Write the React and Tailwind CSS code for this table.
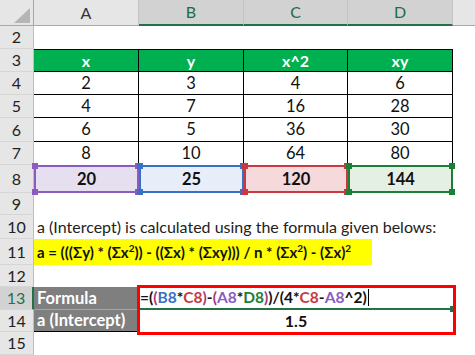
import React from "react";

const FONT = "font-['Lato','Open_Sans',sans-serif]";

const RowHead = ({ n, h, active }) => (
  <div
    className={`w-[34px] shrink-0 flex items-center justify-center border-b border-[#d6d6d6] text-[16px] ${
      active
        ? "bg-[#d2d2d2] text-[#217346] border-r-2 border-r-[#217346]"
        : "bg-[#e6e6e6] text-[#222] border-r border-r-[#bdbdbd]"
    } ${h}`}
  >
    {n}
  </div>
);

const ColHead = ({ label, w, sel }) => (
  <div
    className={`${w} h-full flex items-center justify-center text-[16px] border-r border-[#c4c4c4] ${
      sel
        ? "bg-[#d2d2d2] text-[#1e6b45] border-b-2 border-b-[#217346]"
        : "bg-[#e6e6e6] text-[#333] border-b border-b-[#a8a8a8]"
    }`}
  >
    {label}
  </div>
);

const widths = ["w-[105px]", "w-[105px]", "w-[104px]", "w-[105px]"];

const DataRow = ({ n, vals, h }) => (
  <div className={`flex ${h}`}>
    <RowHead n={n} h={h} />
    {vals.map((v, i) => (
      <div
        key={i}
        className={`${widths[i]} shrink-0 flex items-center justify-center border-r border-b border-black text-[16.5px] text-[#111]`}
      >
        {v}
      </div>
    ))}
    <div className="flex-1" />
  </div>
);

const Corner = ({ pos, color }) => (
  <span className={`absolute w-[6px] h-[6px] ${pos} ${color}`} />
);

const SumCell = ({ w, v, border, fill, sq }) => (
  <div
    className={`${w} shrink-0 relative flex items-center justify-center border-2 ${border} ${fill} font-bold text-[16.5px] text-[#111]`}
  >
    {v}
    <Corner pos="-left-[4px] -top-[4px]" color={sq} />
    <Corner pos="-right-[4px] -top-[4px]" color={sq} />
    <Corner pos="-left-[4px] -bottom-[4px]" color={sq} />
    <Corner pos="-right-[4px] -bottom-[4px]" color={sq} />
  </div>
);

const Sup = ({ children }) => (
  <sup className="text-[10px] relative -top-[6px]">{children}</sup>
);

export default function App() {
  return (
    <div className={`w-[475px] h-[355px] overflow-hidden bg-white ${FONT}`}>
      {/* column headers */}
      <div className="flex h-[26px]">
        <div className="w-[34px] shrink-0 relative bg-[#e6e6e6] border-r border-b border-[#a8a8a8]">
          <svg className="absolute left-[14px] top-[8px]" width="16" height="15" viewBox="0 0 16 15">
            <polygon points="16,0 16,15 0,15" fill="#b5b5b5" />
          </svg>
        </div>
        <ColHead label="A" w="w-[105px]" />
        <ColHead label="B" w="w-[105px]" sel />
        <ColHead label="C" w="w-[104px]" sel />
        <ColHead label="D" w="w-[105px]" sel />
        <div className="flex-1 bg-[#e6e6e6] border-b border-[#a8a8a8]" />
      </div>

      {/* row 2 */}
      <div className="flex h-[23px]">
        <RowHead n="2" h="h-[23px]" />
      </div>

      {/* row 3 header */}
      <div className="flex h-[23px]">
        <RowHead n="3" h="h-[23px]" />
        {["x", "y", "x^2", "xy"].map((v, i) => (
          <div
            key={v}
            className={`${widths[i]} shrink-0 flex items-center justify-center bg-[#00b050] border-r border-t border-b border-black text-white font-bold text-[16px]`}
          >
            {v}
          </div>
        ))}
      </div>

      <DataRow n="4" vals={["2", "3", "4", "6"]} h="h-[23px]" />
      <DataRow n="5" vals={["4", "7", "16", "28"]} h="h-[23px]" />
      <DataRow n="6" vals={["6", "5", "36", "30"]} h="h-[24px]" />
      <div className="flex h-[23px]">
        <RowHead n="7" h="h-[23px]" />
        {["8", "10", "64", "80"].map((v, i) => (
          <div
            key={i}
            className={`${widths[i]} shrink-0 flex items-center justify-center border-r border-black text-[16.5px] text-[#111]`}
          >
            {v}
          </div>
        ))}
      </div>

      {/* row 8 sums */}
      <div className="flex h-[28px]">
        <RowHead n="8" h="h-[28px]" />
        <SumCell w="w-[105px]" v="20" border="border-[#8a5cc0]" fill="bg-[#e6dff0]" sq="bg-[#8a5cc0]" />
        <SumCell w="w-[105px]" v="25" border="border-[#3a6fc6]" fill="bg-[#e7eef9]" sq="bg-[#3a6fc6]" />
        <SumCell w="w-[104px]" v="120" border="border-[#c73a42]" fill="bg-[#f5d9db]" sq="bg-[#c73a42]" />
        <SumCell w="w-[105px]" v="144" border="border-[#1b7f35]" fill="bg-[#e3f0e3]" sq="bg-[#1b7f35]" />
      </div>

      {/* row 9 */}
      <div className="flex h-[22px]">
        <RowHead n="9" h="h-[22px]" />
      </div>

      {/* row 10 */}
      <div className="flex h-[24px]">
        <RowHead n="10" h="h-[24px]" />
        <div className="pl-[3px] flex items-center text-[16px] text-[#222] whitespace-nowrap">
          a (Intercept) is calculated using the formula given belows:
        </div>
      </div>

      {/* row 11 */}
      <div className="flex h-[26px]">
        <RowHead n="11" h="h-[26px]" />
        <div className="w-[338px] shrink-0 bg-[#ffff00] pl-[3px] flex items-center font-bold text-[15px] text-[#111] whitespace-nowrap">
          <span>
            a = (((Σy) * (Σx<Sup>2</Sup>)) - ((Σx) * (Σxy))) / n * (Σx<Sup>2</Sup>) - (Σx)<Sup>2</Sup>
          </span>
        </div>
      </div>

      {/* row 12 */}
      <div className="flex h-[22px]">
        <RowHead n="12" h="h-[22px]" />
      </div>

      {/* rows 13-14 */}
      <div className="flex h-[45px]">
        <div className="flex flex-col">
          <RowHead n="13" h="h-[23px]" active />
          <RowHead n="14" h="h-[22px]" />
        </div>
        <div className="w-[105px] shrink-0 flex flex-col border-b border-black">
          <div className="h-[23px] bg-[#7f7f7f] border-b border-[#a5a5a5] pl-[3px] flex items-center text-white font-bold text-[16.5px]">
            Formula
          </div>
          <div className="h-[21px] bg-[#7f7f7f] pl-[3px] flex items-center text-white font-bold text-[16.5px]">
            a (Intercept)
          </div>
        </div>
        <div className="w-[314px] shrink-0 relative flex flex-col">
          <div className="h-[23px] relative flex items-center pl-[1px] font-bold text-[15.5px] text-[#111] whitespace-nowrap border-b-2 border-[#217346]">
            <span>=(</span>
            <span className="text-[#a23a7c]">(</span>
            <span className="text-[#3a6fc6]">B8</span>
            <span>*</span>
            <span className="text-[#c73a42]">C8</span>
            <span className="text-[#a23a7c]">)</span>
            <span>-</span>
            <span className="text-[#a23a7c]">(</span>
            <span className="text-[#8a5cc0]">A8</span>
            <span>*</span>
            <span className="text-[#1b7f35]">D8</span>
            <span className="text-[#a23a7c]">)</span>
            <span>)/(4*</span>
            <span className="text-[#c73a42]">C8</span>
            <span>-</span>
            <span className="text-[#8a5cc0]">A8</span>
            <span>^2)</span>
            <span className="w-px h-[17px] bg-black ml-px" />
            <span className="absolute -right-[3px] -bottom-[4px] w-[6px] h-[6px] bg-[#217346]" />
          </div>
          <div className="h-[22px] flex items-center justify-center font-bold text-[16px] text-[#111]">
            1.5
          </div>
          <div className="absolute -left-[2px] -top-[2px] -right-[3px] -bottom-[3px] border-[3px] border-[#ff0000]" />
        </div>
      </div>

      {/* row 15 */}
      <div className="flex h-[23px]">
        <RowHead n="15" h="h-[23px]" />
      </div>
    </div>
  );
}
